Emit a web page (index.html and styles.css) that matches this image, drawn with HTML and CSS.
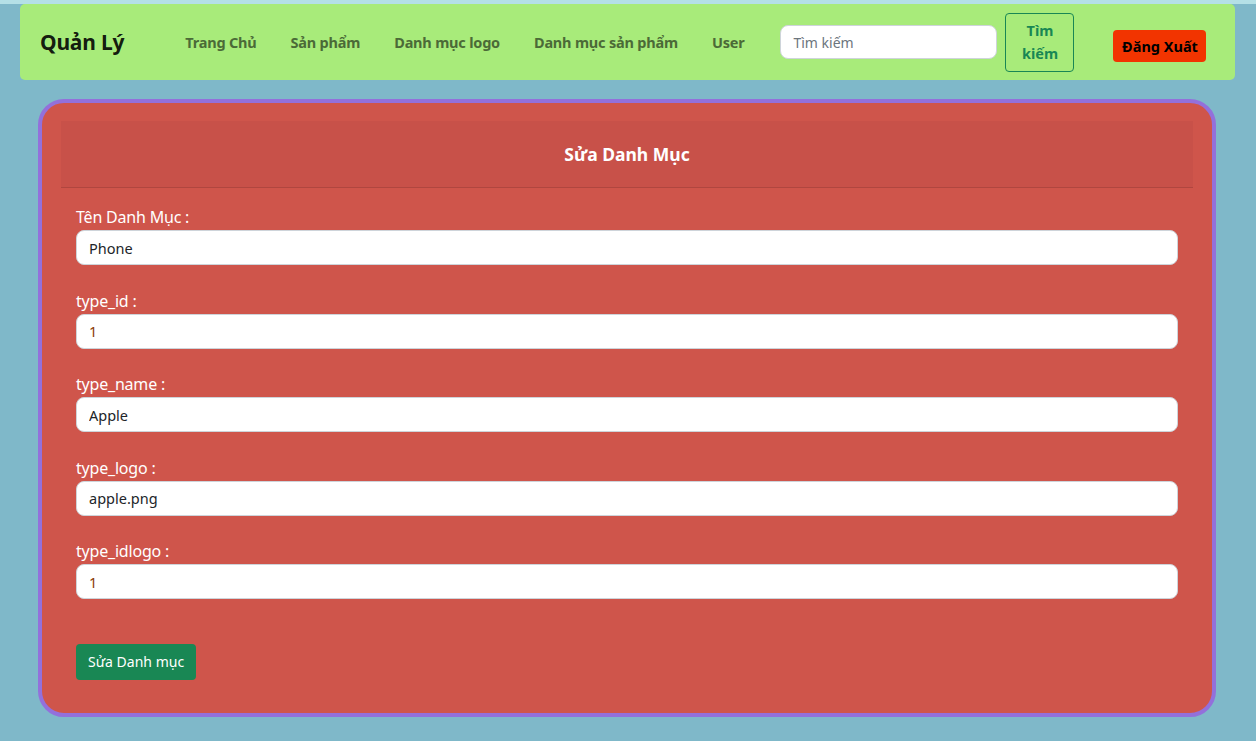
FILE: index.html
```html
<!DOCTYPE html>
<html lang="vi">
<head>
<meta charset="utf-8">
<title>Sửa Danh Mục</title>
<link rel="stylesheet" href="styles.css">
</head>
<body>
<div class="topbar">
  <nav class="navbar">
    <a class="brand" href="#">Quản Lý</a>
    <ul class="nav-links">
      <li><a href="#">Trang Chủ</a></li>
      <li><a href="#">Sản phẩm</a></li>
      <li><a href="#">Danh mục logo</a></li>
      <li><a href="#">Danh mục sản phẩm</a></li>
      <li><a href="#">User</a></li>
    </ul>
    <form class="search">
      <input class="search-input" type="text" placeholder="Tìm kiếm">
      <button class="search-btn" type="button">Tìm<br>kiếm</button>
    </form>
    <button class="logout" type="button">Đăng Xuất</button>
  </nav>
</div>
<main class="main">
  <section class="card">
    <div class="card-header">Sửa Danh Mục</div>
    <form class="card-body">
      <div class="field"><label>Tên Danh Mục :</label><input class="control" type="text" value="Phone"></div>
      <div class="field"><label>type_id :</label><input class="control num" type="text" value="1"></div>
      <div class="field"><label>type_name :</label><input class="control" type="text" value="Apple"></div>
      <div class="field"><label>type_logo :</label><input class="control" type="text" value="apple.png"></div>
      <div class="field"><label>type_idlogo :</label><input class="control num" type="text" value="1"></div>
      <button class="submit" type="button">Sửa Danh mục</button>
    </form>
  </section>
</main>
</body>
</html>
```
FILE: styles.css
```css
* { box-sizing: border-box; }
html, body { margin: 0; padding: 0; }
body {
  background: #7fb8c9;
  font-family: "Noto Sans", "Open Sans", sans-serif;
  color: #212529;
  min-height: 741px;
}
.topbar {
  border-top: 4px solid #b4e0e6;
  padding: 0 21px 0 20px;
}
.navbar {
  background: #a8eb7a;
  border-radius: 5px;
  height: 76px;
  display: flex;
  align-items: center;
  padding: 0 0 0 20px;
}
.brand {
  font-size: 21px;
  font-weight: 700;
  color: rgba(0,0,0,0.9);
  text-decoration: none;
  margin-right: 44px;
  letter-spacing: -0.2px;
}
.nav-links {
  list-style: none;
  display: flex;
  margin: 0;
  padding: 0;
  gap: 0;
}
.nav-links a {
  display: block;
  padding: 8px 17px;
  font-size: 14.5px;
  font-weight: 700;
  color: #4b6a37;
  text-decoration: none;
  letter-spacing: -0.2px;
}
.search {
  display: flex;
  align-items: center;
  margin-left: 19px;
}
.search-input {
  width: 217px;
  height: 34px;
  border: 1px solid #ced4da;
  border-radius: 8px;
  padding: 0 12px;
  font-family: inherit;
  font-size: 14px;
  background: #fff;
}
.search-input::placeholder { color: #6c757d; }
.search-btn {
  margin-left: 8px;
  width: 69px;
  height: 59px;
  border: 1px solid #198754;
  border-radius: 4px;
  background: transparent;
  color: #198754;
  font-family: inherit;
  font-weight: 700;
  font-size: 14.5px;
  line-height: 23px;
  padding: 0;
}
.logout {
  margin-left: 39px;
  margin-top: 7px;
  width: 93px;
  height: 32px;
  background: #f23400;
  border: none;
  border-radius: 4px;
  font-family: inherit;
  font-weight: 700;
  font-size: 14.5px;
  color: #000;
  padding: 0;
}
.main {
  padding: 19px 40px 0 38px;
}
.card {
  background: #cf554b;
  border: 4px solid #9370db;
  border-radius: 26px;
  padding: 18px 19px 33px 19px;
  height: 618px;
}
.card-header {
  background: #c85149;
  border-bottom: 1px solid #b0463f;
  height: 67px;
  display: flex;
  align-items: center;
  justify-content: center;
  color: #fff;
  font-weight: 700;
  font-size: 17.5px;
}
.card-body {
  padding: 17px 15px 0 15px;
  display: flex;
  flex-direction: column;
  align-items: flex-start;
}
.field {
  width: 100%;
  height: 83.5px;
  display: flex;
  flex-direction: column;
}
.field label {
  color: #fff;
  font-size: 16px;
  line-height: 25px;
  letter-spacing: -0.2px;
}
.control {
  width: 100%;
  height: 35px;
  border: 1px solid #ced4da;
  border-radius: 8px;
  background: #fff;
  padding: 0 12px;
  font-family: inherit;
  font-size: 14.5px;
  color: #212529;
}
.control.num { color: #8a3a00; }
.submit {
  margin-top: 21px;
  height: 36px;
  padding: 0 12px;
  background: #198754;
  border: none;
  border-radius: 4px;
  color: #fff;
  font-family: inherit;
  font-size: 14px;
}
```
